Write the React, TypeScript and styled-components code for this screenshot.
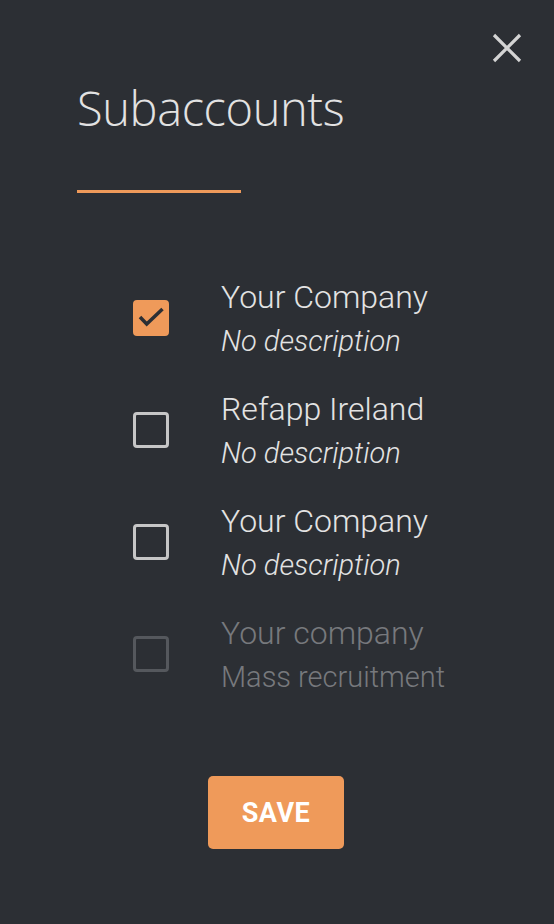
import React, { useState } from 'react';
import styled, { createGlobalStyle } from 'styled-components';

const GlobalStyle = createGlobalStyle`
  html, body {
    margin: 0;
    padding: 0;
    background: #2c2f34;
  }
  * {
    box-sizing: border-box;
  }
`;

const Panel = styled.div`
  width: 554px;
  height: 924px;
  background: #2c2f34;
  display: flex;
  flex-direction: column;
  font-family: Roboto, 'Liberation Sans', sans-serif;
  overflow: hidden;
`;

const TopBar = styled.div`
  display: flex;
  justify-content: flex-end;
  padding: 33px 32px 0 0;
  height: 62px;
`;

const CloseButton = styled.button`
  width: 30px;
  height: 30px;
  padding: 0;
  border: none;
  background: none;
  cursor: pointer;
  display: flex;
  align-items: center;
  justify-content: center;
`;

const Title = styled.h1`
  margin: 16px 0 0 77px;
  font-family: 'Open Sans', Ubuntu, sans-serif;
  font-weight: 300;
  font-size: 47px;
  line-height: 60px;
  color: #e2e2e2;
  letter-spacing: -0.4px;
`;

const Underline = styled.div`
  margin: 52px 0 0 77px;
  width: 164px;
  height: 3px;
  background: #ef9a5a;
`;

const List = styled.ul`
  list-style: none;
  margin: 80px 0 0 133px;
  padding: 0;
  display: flex;
  flex-direction: column;
  gap: 20px;
`;

const Row = styled.li<{ $disabled?: boolean }>`
  display: flex;
  align-items: center;
  gap: 52px;
  height: 92px;
  cursor: ${(p) => (p.$disabled ? 'default' : 'pointer')};
`;

const Box = styled.span<{ $checked?: boolean; $disabled?: boolean }>`
  flex: none;
  width: 36px;
  height: 36px;
  margin-top: -2px;
  border-radius: 4px;
  border: 3px solid
    ${(p) => (p.$checked ? '#ef9a5a' : p.$disabled ? '#55585d' : '#c6c6c6')};
  background: ${(p) => (p.$checked ? '#ef9a5a' : 'transparent')};
  display: flex;
  align-items: center;
  justify-content: center;
`;

const Texts = styled.div`
  display: flex;
  flex-direction: column;
`;

const Name = styled.div<{ $disabled?: boolean }>`
  font-size: 32px;
  font-weight: 300;
  line-height: 40px;
  color: ${(p) => (p.$disabled ? '#77797d' : '#e3e3e3')};
`;

const Desc = styled.div<{ $disabled?: boolean }>`
  font-size: 29px;
  font-weight: 300;
  line-height: 40px;
  margin-top: 4px;
  font-style: ${(p) => (p.$disabled ? 'normal' : 'italic')};
  color: ${(p) => (p.$disabled ? '#77797d' : '#e3e3e3')};
`;

const Footer = styled.div`
  display: flex;
  justify-content: center;
  margin-top: 75px;
  padding-right: 2px;
`;

const SaveButton = styled.button`
  width: 136px;
  height: 73px;
  border: none;
  border-radius: 5px;
  background: #ef9a5a;
  color: #ffffff;
  font-family: Roboto, 'Liberation Sans', sans-serif;
  font-weight: 700;
  font-size: 27px;
  letter-spacing: 0.5px;
  cursor: pointer;
`;

interface Account {
  name: string;
  description: string;
  disabled?: boolean;
}

const accounts: Account[] = [
  { name: 'Your Company', description: 'No description' },
  { name: 'Refapp Ireland', description: 'No description' },
  { name: 'Your Company', description: 'No description' },
  { name: 'Your company', description: 'Mass recruitment', disabled: true },
];

function App(): JSX.Element {
  const [checked, setChecked] = useState<boolean[]>([true, false, false, false]);

  const toggle = (index: number) => {
    if (accounts[index].disabled) return;
    setChecked((prev) => prev.map((v, i) => (i === index ? !v : v)));
  };

  return (
    <>
      <GlobalStyle />
      <Panel>
        <TopBar>
          <CloseButton aria-label="close">
            <svg width="30" height="30" viewBox="0 0 30 30">
              <path
                d="M2 2 L28 28 M28 2 L2 28"
                stroke="#d4d4d4"
                strokeWidth="3.2"
                strokeLinecap="butt"
              />
            </svg>
          </CloseButton>
        </TopBar>
        <Title>Subaccounts</Title>
        <Underline />
        <List>
          {accounts.map((acc, index) => (
            <Row key={index} $disabled={acc.disabled} onClick={() => toggle(index)}>
              <Box $checked={checked[index]} $disabled={acc.disabled}>
                {checked[index] && (
                  <svg width="30" height="30" viewBox="0 0 30 30">
                    <path
                      d="M4 14 L10.7 21 L26.5 6"
                      fill="none"
                      stroke="#2c2f34"
                      strokeWidth="3.5"
                    />
                  </svg>
                )}
              </Box>
              <Texts>
                <Name $disabled={acc.disabled}>{acc.name}</Name>
                <Desc $disabled={acc.disabled}>{acc.description}</Desc>
              </Texts>
            </Row>
          ))}
        </List>
        <Footer>
          <SaveButton>SAVE</SaveButton>
        </Footer>
      </Panel>
    </>
  );
}

export default App;
